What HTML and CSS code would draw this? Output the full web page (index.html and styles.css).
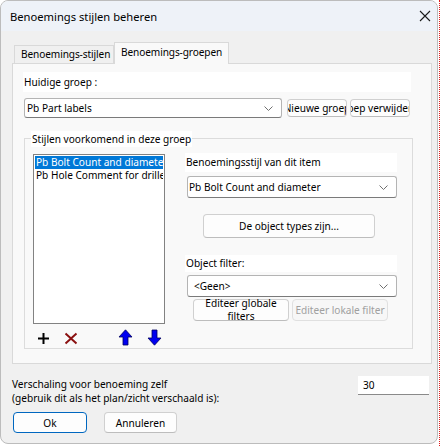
FILE: index.html
```html
<!DOCTYPE html>
<html lang="nl">
<head>
<meta charset="utf-8">
<title>Benoemings stijlen beheren</title>
<link rel="stylesheet" href="styles.css">
</head>
<body>
<div class="window">
  <div class="titlebar">
    <span class="title">Benoemings stijlen beheren</span>
    <svg class="close" width="12" height="12" viewBox="0 0 12 12"><path d="M1 1 L11 11 M11 1 L1 11" stroke="#1b1b1b" stroke-width="1.1" fill="none"/></svg>
  </div>

  <div class="content">
    <div class="tabs">
      <div class="tab">Benoemings-stijlen</div>
      <div class="tab active">Benoemings-groepen</div>
    </div>

    <div class="panel">
      <div class="label-bar wide">Huidige groep :</div>

      <div class="group-row">
        <div class="combo wide-combo">
          <span>Pb Part labels</span>
          <svg class="chev" width="9" height="5" viewBox="0 0 9 5"><path d="M0.5 0.5 L4.5 4.5 L8.5 0.5" stroke="#707070" fill="none"/></svg>
        </div>
        <div class="btn small-btn"><span>Nieuwe groep</span></div>
        <div class="btn small-btn second"><span>Groep verwijderen</span></div>
      </div>

      <div class="group">
        <span class="legend">Stijlen voorkomend in deze groep</span>
        <div class="group-body">
          <div class="left-col">
            <div class="listbox">
              <div class="item selected">Pb Bolt Count and diameter</div>
              <div class="item">Pb Hole Comment for drilled holes</div>
            </div>
            <div class="tools">
              <svg class="t-add" width="13" height="13" viewBox="0 0 13 13"><path d="M6.5 1 V12 M1 6.5 H12" stroke="#000" stroke-width="2" fill="none"/></svg>
              <svg class="t-del" width="14" height="13" viewBox="0 0 14 13"><path d="M1.5 1.5 L12.5 11.5 M12.5 1.5 L1.5 11.5" stroke="#8b1111" stroke-width="2" fill="none"/></svg>
              <svg class="t-up" width="15" height="17" viewBox="0 0 15 17"><path d="M7.5 0.8 L14 8 L10 8 L10 16 L5 16 L5 8 L1 8 Z" fill="#0000f0" stroke="#000060" stroke-width="0.8"/></svg>
              <svg class="t-down" width="15" height="17" viewBox="0 0 15 17"><path d="M7.5 16.2 L14 9 L10 9 L10 1 L5 1 L5 9 L1 9 Z" fill="#0000f0" stroke="#000060" stroke-width="0.8"/></svg>
            </div>
          </div>

          <div class="right-col">
            <div class="label-bar side">Benoemingsstijl van dit item</div>
            <div class="combo side-combo first-combo">
              <span>Pb Bolt Count and diameter</span>
              <svg class="chev" width="9" height="5" viewBox="0 0 9 5"><path d="M0.5 0.5 L4.5 4.5 L8.5 0.5" stroke="#707070" fill="none"/></svg>
            </div>
            <div class="btn types-btn"><span>De object types zijn...</span></div>
            <div class="label-bar side filter-label">Object filter:</div>
            <div class="combo side-combo filter-combo">
              <span>&lt;Geen&gt;</span>
              <svg class="chev" width="9" height="5" viewBox="0 0 9 5"><path d="M0.5 0.5 L4.5 4.5 L8.5 0.5" stroke="#707070" fill="none"/></svg>
            </div>
            <div class="filter-btns">
              <div class="btn filter-btn"><span>Editeer globale filters</span></div>
              <div class="btn filter-btn disabled"><span>Editeer lokale filter</span></div>
            </div>
          </div>
        </div>
      </div>
    </div>
  </div>

  <div class="footer">
    <div class="scale-text">Verschaling voor benoeming zelf<br>(gebruik dit als het plan/zicht verschaald is):</div>
    <div class="scale-input">30</div>
  </div>

  <div class="actions">
    <div class="btn action default"><span>Ok</span></div>
    <div class="btn action"><span>Annuleren</span></div>
  </div>
</div>
<div class="edge"></div>
</body>
</html>
```

FILE: styles.css
```css
* {
  box-sizing: border-box;
}

html, body {
  margin: 0;
  padding: 0;
}

body {
  width: 441px;
  height: 446px;
  background: #ffffff;
  display: flex;
  font-family: "Noto Sans", "Open Sans", sans-serif;
  font-size: 10.1px;
  color: #000;
  overflow: hidden;
  white-space: nowrap;
}

.window {
  width: 438px;
  height: 444px;
  border: 1px solid #bcbcbc;
  border-radius: 8px;
  background: #f0f0f0;
  overflow: hidden;
  display: flex;
  flex-direction: column;
  flex-shrink: 0;
}

.edge {
  width: 1px;
  margin-left: 1px;
  height: 446px;
  border-left: 1px dotted #e01b1b;
}

/* title bar */
.titlebar {
  height: 30px;
  flex-shrink: 0;
  background: #eef2f8;
  display: flex;
  align-items: center;
  justify-content: space-between;
  padding: 0 6px 0 9px;
}

.title {
  font-size: 11.2px;
}

.close {
  display: block;
}

/* tabs */
.content {
  padding: 11px 0 0 11px;
}

.tabs {
  display: flex;
  align-items: flex-end;
  height: 21px;
  padding-left: 2px;
}

.tab {
  width: 100px;
  height: 18px;
  border: 1px solid #d9d9d9;
  border-bottom: none;
  background: #f0f0f0;
  line-height: 17px;
  padding-left: 6px;
  letter-spacing: -0.1px;
}

.tab.active {
  width: 115px;
  height: 22px;
  background: #f9f9f9;
  margin-bottom: -1px;
  position: relative;
  line-height: 19px;
  padding-left: 6px;
}

.panel {
  width: 420px;
  height: 301px;
  border: 1px solid #d9d9d9;
  background: #f9f9f9;
  padding: 8px 0 0 10px;
}

.label-bar {
  background: #fff;
  padding-left: 1px;
}

.label-bar.wide {
  width: 388px;
  height: 20px;
  line-height: 20px;
}

/* combos and buttons */
.combo {
  display: flex;
  align-items: center;
  justify-content: space-between;
  background: #fff;
  border: 1px solid #b4b4b4;
  border-bottom-color: #7a7a7a;
  border-radius: 3px;
  padding: 0 8px 0 2px;
}

.chev {
  display: block;
}

.group-row {
  display: flex;
  margin-top: 6px;
  height: 20px;
}

.wide-combo {
  width: 258px;
  height: 20px;
  margin-left: 1px;
}

.btn {
  display: flex;
  align-items: center;
  justify-content: center;
  background: #fdfdfd;
  border: 1px solid #d0d0d0;
  border-bottom-color: #bdbdbd;
  border-radius: 4px;
  white-space: nowrap;
  overflow: hidden;
}

.btn span {
  flex-shrink: 0;
}

.small-btn {
  width: 60px;
  height: 18px;
  margin: 1px 0 0 5px;
}

.small-btn.second {
  margin-left: 3px;
}

/* group box */
.group {
  margin: 20px 0 0 1px;
  width: 389px;
  height: 211px;
  border: 1px solid #dcdcdc;
}

.legend {
  display: block;
  width: fit-content;
  margin: -8px 0 0 6px;
  height: 16px;
  line-height: 16px;
  background: #fff;
  padding: 0 1px;
}

.group-body {
  display: flex;
  margin-top: 7px;
  padding-left: 8px;
}

.listbox {
  width: 132px;
  height: 170px;
  background: #fff;
  border: 1px solid #828282;
  padding: 1px;
  overflow: hidden;
}

.item {
  height: 13px;
  line-height: 13px;
  padding-left: 1px;
  overflow: hidden;
}

.item.selected {
  background: #0078d7;
  color: #fff;
}

.tools {
  display: flex;
  align-items: flex-end;
  height: 17px;
  margin-top: 5px;
}

.tools svg {
  display: block;
}

.t-add {
  margin: 0 0 1px 4px;
}

.t-del {
  margin: 0 0 1px 14px;
}

.t-up {
  margin-left: 40px;
}

.t-down {
  margin-left: 14px;
}

.right-col {
  margin: -1px 0 0 20px;
}

.label-bar.side {
  width: 212px;
  height: 19px;
  line-height: 19px;
}

.side-combo {
  width: 210px;
  height: 22px;
  margin-left: 2px;
  padding-left: 1px;
}

.first-combo {
  margin-top: 4px;
}

.types-btn {
  width: 172px;
  height: 24px;
  margin: 16px 0 0 18px;
}

.label-bar.filter-label {
  height: 17px;
  line-height: 17px;
  margin-top: 17px;
}

.filter-combo {
  margin-top: 3px;
  padding-left: 6px;
}

.filter-btns {
  display: flex;
  gap: 3px;
  margin: 2px 0 0 8px;
}

.filter-btn {
  width: 96px;
  height: 22px;
  overflow: visible;
  text-align: center;
  line-height: 13px;
}

.filter-btn span {
  white-space: normal;
  width: 80px;
}

.filter-btn.disabled {
  color: #a0a0a0;
  background: #f7f7f7;
  border-color: #e0e0e0;
  overflow: hidden;
}

.filter-btn.disabled span {
  white-space: nowrap;
  width: auto;
}

/* footer */
.footer {
  display: flex;
  justify-content: space-between;
  padding: 12px 8px 0 11px;
}

.scale-text {
  line-height: 14px;
  margin-top: 1px;
}

.scale-input {
  width: 71px;
  height: 19px;
  background: #fff;
  border-bottom: 1px solid #8a8a8a;
  padding-left: 5px;
  line-height: 18px;
}

.actions {
  display: flex;
  gap: 17px;
  padding: 7px 0 0 12px;
}

.action {
  width: 73px;
  height: 21px;
}

.action.default {
  width: 74px;
  border-color: #0067c0;
}
```
